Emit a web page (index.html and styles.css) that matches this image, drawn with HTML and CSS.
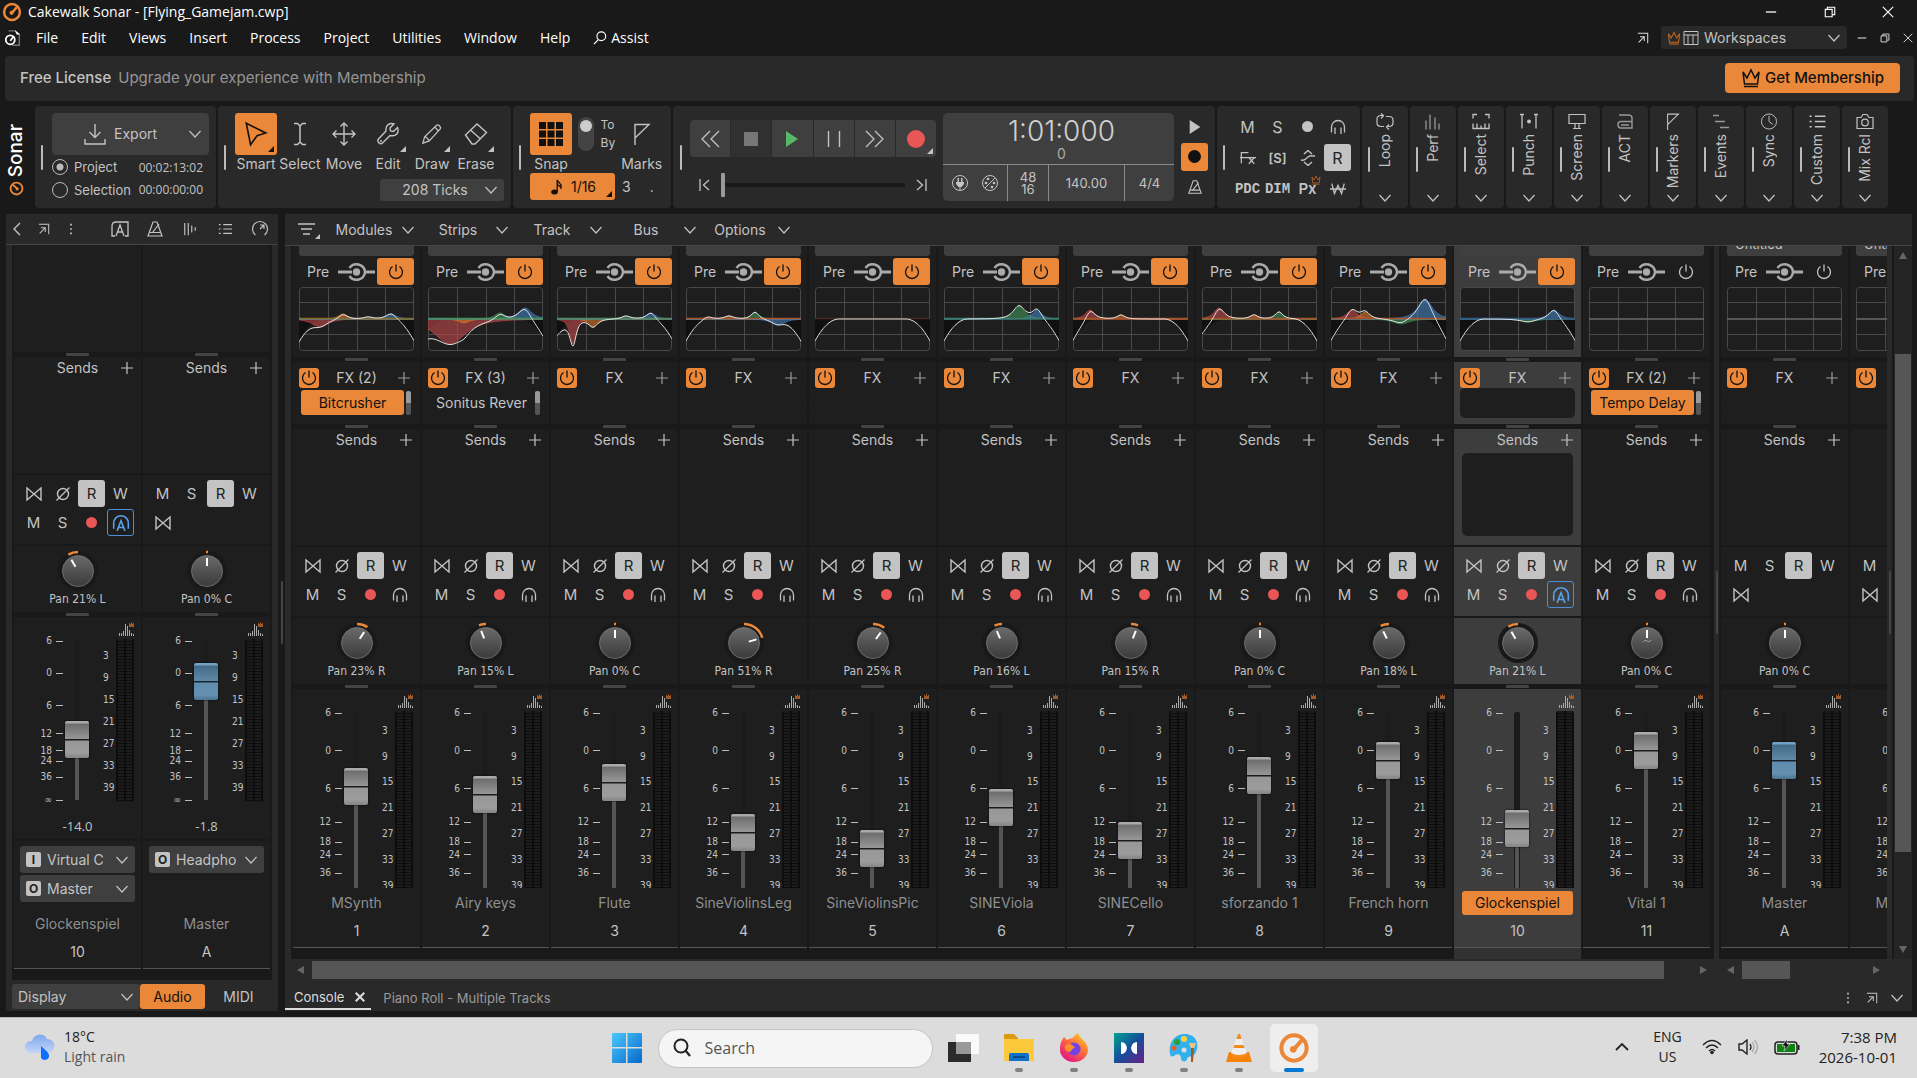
FILE: index.html
```html
<!DOCTYPE html>
<html lang="en">
<head>
<meta charset="utf-8">
<title>Cakewalk Sonar - [Flying_Gamejam.cwp]</title>
<link rel="stylesheet" href="styles.css">
</head>
<body>
<svg class="defs" aria-hidden="true">
  <symbol id="logo" viewBox="0 0 24 24"><circle cx="12" cy="12" r="9.5" fill="none" stroke="currentColor" stroke-width="3"/><path d="M11 14 18 6" stroke="currentColor" stroke-width="3"/><circle cx="11.500" cy="13" r="2.500" fill="currentColor"/></symbol>
  <symbol id="doc" viewBox="0 0 20 20"><path d="M5 2h7l5 4v12H9" fill="none" stroke="#777" stroke-width="1.500"/><path d="M12 1l6 5h-4z" fill="#fff"/><circle cx="7" cy="12" r="5" fill="#191919" stroke="#fff" stroke-width="2"/><path d="M7 13l4-5" stroke="#fff" stroke-width="2"/></symbol>
  <symbol id="chev" viewBox="0 0 14 14"><path d="M1.500 4 7 10l5.500-6" fill="none" stroke="currentColor" stroke-width="1.200"/></symbol>
  <symbol id="back" viewBox="0 0 14 14"><path d="M10 1 4 7l6 6" fill="none" stroke="currentColor" stroke-width="1.400"/></symbol>
  <symbol id="popout" viewBox="0 0 14 14"><path d="M1 1.500h11.500V13M2 12l6-6M3.500 5.500h5v5" fill="none" stroke="currentColor" stroke-width="1.200"/></symbol>
  <symbol id="dots" viewBox="0 0 14 14"><path d="M6 1h2v2H6zM6 6h2v2H6zM6 11h2v2H6z" fill="currentColor"/></symbol>
  <symbol id="arch" viewBox="0 0 18 16"><path d="M4 15H1V5q0-4 4-4h12v14h-3M5 15 9 4l4 11M6.500 11h5" fill="none" stroke="currentColor" stroke-width="1.300"/></symbol>
  <symbol id="metro" viewBox="0 0 18 18"><path d="M7 2h4l5 14H2zM4 12.500h10M6.500 12.500 13 4" fill="none" stroke="currentColor" stroke-width="1.200"/></symbol>
  <symbol id="bars" viewBox="0 0 16 16"><path d="M2 1v14M6 1v14M10 4v8M14 6v4" stroke="currentColor" stroke-width="1.300"/></symbol>
  <symbol id="list" viewBox="0 0 16 16"><path d="M1 3h2M6 3h10M1 8h2M6 8h10M1 13h2M6 13h10" stroke="currentColor" stroke-width="1.300"/></symbol>
  <symbol id="gauge" viewBox="0 0 18 18"><path d="M4.500 15A7.500 7.500 0 1 1 13.500 15M9 9l4-4M9 5l4 0v4" fill="none" stroke="currentColor" stroke-width="1.200"/></symbol>
  <symbol id="filter" viewBox="0 0 22 18"><path d="M0 3h17M3 8h11M5 13h7" stroke="currentColor" stroke-width="1.300"/><path d="M22 13v5h-5z" fill="currentColor"/></symbol>
  <symbol id="power" viewBox="0 0 18 18"><path d="M5.500 3.500a6.500 6.500 0 1 0 7 0M9 1.500v7" fill="none" stroke="currentColor" stroke-width="1.300"/></symbol>
  <symbol id="prepost" viewBox="0 0 37 22"><path d="M0 11h14M27 11h10" stroke="#aaa" stroke-width="3"/><path d="M11.500 7A8.500 8.500 0 0 1 27 11 8.500 8.500 0 0 1 11.500 15" fill="none" stroke="#aaa" stroke-width="2.500"/><circle cx="18.500" cy="11" r="3.700" fill="#aaa"/></symbol>
  <symbol id="plus" viewBox="0 0 12 12"><path d="M6 0v12M0 6h12" stroke="currentColor" stroke-width="1.200"/></symbol>
  <symbol id="bow" viewBox="0 0 16 14"><path d="M1 1v12L15 1v12z" fill="none" stroke="currentColor" stroke-width="1.400"/></symbol>
  <symbol id="phase" viewBox="0 0 16 16"><circle cx="8" cy="8" r="5.500" fill="none" stroke="currentColor" stroke-width="1.400"/><path d="M1.500 14.500l13-13" stroke="currentColor" stroke-width="1.300"/></symbol>
  <symbol id="phones" viewBox="0 0 16 16"><path d="M1.500 13V8a6.500 6.500 0 0 1 13 0v5M5 8.500V15M11 8.500V15M1.500 13.500H2M14 13.500h.5" fill="none" stroke="currentColor" stroke-width="1.300"/></symbol>
  <symbol id="autoin" viewBox="0 0 16 16"><path d="M1.500 13V8a6.500 6.500 0 0 1 13 0v5M4.500 15 8 6l3.500 9M6 12h4" fill="none" stroke="currentColor" stroke-width="1.400"/></symbol>
  <symbol id="spectrum" viewBox="0 0 16 14"><path d="M1.500 14v-3M3.500 14v-3M5.500 14V9M7.500 14V2M9.500 14V4M11.500 14V8M13.500 14v-3M15.500 14v-2" stroke="#aaa"/><path d="M11 1h1v1h1V0h1v2h1V1h1v4h-5z" fill="#a05a26"/></symbol>
  <symbol id="crown" viewBox="0 0 20 20"><path d="M2 4l4 6 4-8 4 8 4-6-1.500 12h-13zM3 18.500h14" fill="none" stroke="currentColor" stroke-width="1.500"/></symbol>
  <symbol id="layout" viewBox="0 0 16 16"><path d="M1 1.500h14v13H1zM1 5h14M5 5v9M10 5v9" fill="none" stroke="currentColor"/></symbol>
  <symbol id="mini" viewBox="0 0 14 14"><path d="M1 7h12" stroke="currentColor" stroke-width="1.500"/></symbol>
  <symbol id="restore" viewBox="0 0 14 14"><path d="M1.500 4h8v8.500h-8zM4 4V1.500h8.500V10H10" fill="none" stroke="currentColor" stroke-width="1.300"/></symbol>
  <symbol id="close" viewBox="0 0 14 14"><path d="M1 1l12 12M13 1 1 13" stroke="currentColor" stroke-width="1.300"/></symbol>
  <symbol id="closeb" viewBox="0 0 14 14"><path d="M1 1l12 12M13 1 1 13" stroke="currentColor" stroke-width="2.800"/></symbol>
  <symbol id="mag" viewBox="0 0 16 16"><circle cx="9.500" cy="6" r="5" fill="none" stroke="currentColor" stroke-width="1.300"/><path d="M6 10l-5 5" stroke="currentColor" stroke-width="1.300"/></symbol>
  <symbol id="export" viewBox="0 0 22 22"><path d="M11 1v13M5.500 9l5.500 5.500L16.500 9M1 16v5h20v-5" fill="none" stroke="currentColor" stroke-width="1.400"/></symbol>
  <symbol id="smart" viewBox="0 0 24 24"><path d="M3 2l18 9-8 2.500L7 22z" fill="none" stroke="currentColor" stroke-width="1.500"/></symbol>
  <symbol id="ibeam" viewBox="0 0 24 24"><path d="M6 1.500h3.500L12 4l2.500-2.500H18M12 4v16M6 22.500h3.500L12 20l2.500 2.500H18" fill="none" stroke="currentColor" stroke-width="1.500"/></symbol>
  <symbol id="move" viewBox="0 0 24 24"><path d="M12 1v22M1 12h22M8.500 4.500 12 1l3.500 3.500M8.500 19.500 12 23l3.500-3.500M4.500 8.500 1 12l3.500 3.500M19.500 8.500 23 12l-3.500 3.500" fill="none" stroke="currentColor" stroke-width="1.400"/></symbol>
  <symbol id="wrench" viewBox="0 0 24 24"><path d="M21.500 5.500 17.500 9.500 14.500 9 14 6l4-4C14 .5 9 3 10 9L2.500 17c-2 2.500 1.500 6 4 4L14 13.500c6 1.500 9.500-3 7.500-8z" fill="none" stroke="currentColor" stroke-width="1.400"/><circle cx="5" cy="19" r="1" fill="currentColor"/></symbol>
  <symbol id="pencil" viewBox="0 0 24 24"><path d="M2 22l2-7L17 2.500c2-1.500 5.500 2 4 4L9 19.500zM4.500 14.500l5 5M15 4.500l4.500 4.500" fill="none" stroke="currentColor" stroke-width="1.400"/></symbol>
  <symbol id="eraser" viewBox="0 0 24 24"><path d="M1.500 13 13 2l9.500 8.500L11 22H8zM6.500 8l10 9" fill="none" stroke="currentColor" stroke-width="1.400"/></symbol>
  <symbol id="grid9" viewBox="0 0 24 24"><path d="M0 0h7v7H0zM8.500 0h7v7h-7zM17 0h7v7h-7zM0 8.500h7v7H0zM8.500 8.500h7v7h-7zM17 8.500h7v7h-7zM0 17h7v7H0zM8.500 17h7v7h-7zM17 17h7v7h-7z" fill="#111"/></symbol>
  <symbol id="flag" viewBox="0 0 18 22"><path d="M2 22V1.500h14L2 15" fill="none" stroke="currentColor" stroke-width="1.400"/></symbol>
  <symbol id="note" viewBox="0 0 12 16"><ellipse cx="3.500" cy="13" rx="3.300" ry="2.500" fill="#111"/><path d="M6.200 13V1c1 3 4.500 3 4 7M6.200 5c1 2 4 2 4 5" fill="none" stroke="#111" stroke-width="1.300"/></symbol>
  <symbol id="rew" viewBox="0 0 20 18"><path d="M10 1 2 9l8 8M19 1l-8 8 8 8" fill="none" stroke="currentColor" stroke-width="1.300"/></symbol>
  <symbol id="ff" viewBox="0 0 20 18"><path d="M1 1l8 8-8 8M10 1l8 8-8 8" fill="none" stroke="currentColor" stroke-width="1.300"/></symbol>
  <symbol id="stop" viewBox="0 0 14 14"><path d="M0 0h14v14H0z" fill="#777"/></symbol>
  <symbol id="play" viewBox="0 0 14 18"><path d="M1 1l12 8-12 8z" fill="currentColor"/></symbol>
  <symbol id="pause" viewBox="0 0 14 16"><path d="M1.500 0v16M12.500 0v16" stroke="currentColor" stroke-width="1.400"/></symbol>
  <symbol id="tostart" viewBox="0 0 12 12"><path d="M1 0v12M10 1 4.500 6l5.500 5" fill="none" stroke="currentColor" stroke-width="1.300"/></symbol>
  <symbol id="toend" viewBox="0 0 12 12"><path d="M11 0v12M2 1l5.500 5L2 11" fill="none" stroke="currentColor" stroke-width="1.300"/></symbol>
  <symbol id="plug" viewBox="0 0 18 18"><circle cx="9" cy="9" r="7.500" fill="none" stroke="currentColor"/><path d="M5 8h8v2l-2.500 3h-3L5 10zM6.500 4h1.500v4H6.500zM10 4h1.500v4H10zM8.500 12h1v4h-1z" fill="currentColor"/></symbol>
  <symbol id="midi" viewBox="0 0 18 18"><circle cx="9" cy="9" r="7.500" fill="none" stroke="currentColor"/><path d="M4 14 14 4" stroke="currentColor"/><circle cx="5" cy="9" r="1.300" fill="currentColor"/><circle cx="7" cy="5" r="1.300" fill="currentColor"/><circle cx="11" cy="13" r="1.300" fill="currentColor"/><circle cx="13" cy="9" r="1.300" fill="currentColor"/></symbol>
  <symbol id="fxx" viewBox="0 0 18 16"><path d="M1.500 14V2h8M0 7.500h18M10 7.500l6 7M16 7.500l-6 7" fill="none" stroke="currentColor" stroke-width="1.400"/></symbol>
  <symbol id="flip" viewBox="0 0 16 16"><path d="M4 4l4-3.500L12 4M4 12l4 3.500L12 12M1 10c4 1 4-1 7-3 3-2 3-1 7-1" fill="none" stroke="currentColor" stroke-width="1.400"/></symbol>
  <symbol id="wbar" viewBox="0 0 18 14"><path d="M2 1l3 11 4-9 4 9 3-11M0 7h18" fill="none" stroke="currentColor" stroke-width="1.500"/></symbol>
  <symbol id="loop" viewBox="0 0 18 16"><path d="M8 13H5q-4 0-4-4V6q0-4 4-4h2M10 3h3q4 0 4 4v2q0 4-4 4h-2M5 0l2.500 2L5 5M13 11l-2.500 2.500L13 16" fill="none" stroke="currentColor" stroke-width="1.200"/></symbol>
  <symbol id="perf" viewBox="0 0 18 16"><path d="M2 7v9M6 1v15M11 4v12M15 10v6" stroke="#888" stroke-width="1.500"/></symbol>
  <symbol id="selr" viewBox="0 0 18 16"><path d="M1 5V1h4M13 1h4v4M1 10v5h16v-5M5 15v-5M9 15v-3M13 15v-5" fill="none" stroke="currentColor" stroke-width="1.300"/></symbol>
  <symbol id="punch" viewBox="0 0 18 16"><path d="M2 1v14M16 1v14M0 1h4M14 1h4" stroke="currentColor" stroke-width="1.300"/><circle cx="9" cy="8" r="2" fill="currentColor"/></symbol>
  <symbol id="screen" viewBox="0 0 18 16"><path d="M1 1h16v9H1zM7 10v5M11 10v5M5 15h8" fill="none" stroke="currentColor" stroke-width="1.200"/></symbol>
  <symbol id="act" viewBox="0 0 18 16"><path d="M3 1.500h9q4 0 4 3v10H5q-3 0-3-3.500 0-3 3-3h11M5 11.500h8" fill="none" stroke="#999" stroke-width="1.400"/></symbol>
  <symbol id="events" viewBox="0 0 18 16"><path d="M1 2h6M3 8h10M8 14h9" stroke="#999" stroke-width="1.600"/></symbol>
  <symbol id="clock" viewBox="0 0 18 18"><circle cx="9" cy="9" r="8" fill="none" stroke="currentColor"/><path d="M9 3v6l4 3" fill="none" stroke="currentColor"/></symbol>
  <symbol id="cam" viewBox="0 0 18 16"><path d="M1 4h4l2-3h4l2 3h4v11H1z" fill="none" stroke="currentColor" stroke-width="1.200"/><circle cx="9" cy="9" r="3.300" fill="none" stroke="currentColor" stroke-width="1.200"/></symbol>
</svg>

<div class="app">
  <header class="titlebar">
    <svg class="s20 orange"><use href="#logo"/></svg>
    <span class="wintitle">Cakewalk Sonar - [Flying_Gamejam.cwp]</span>
    <div class="winbtns">
      <button aria-label="Minimize"><svg class="s12"><use href="#mini"/></svg></button>
      <button aria-label="Restore"><svg class="s12"><use href="#restore"/></svg></button>
      <button aria-label="Close"><svg class="s12"><use href="#close"/></svg></button>
    </div>
  </header>
  <nav class="menubar">
    <svg class="s18"><use href="#doc"/></svg>
    <div class="menus">
      <button>File</button><button>Edit</button><button>Views</button><button>Insert</button><button>Process</button><button>Project</button><button>Utilities</button><button>Window</button><button>Help</button>
      <button class="assist"><svg class="s14"><use href="#mag"/></svg>Assist</button>
    </div>
    <div class="menuright">
      <button aria-label="Pop out"><svg class="s12"><use href="#popout"/></svg></button>
      <button class="workspaces"><svg class="s14 crownc"><use href="#crown"/></svg><svg class="s16"><use href="#layout"/></svg><span>Workspaces</span><svg class="s14"><use href="#chev"/></svg></button>
      <button aria-label="Minimize document"><svg class="s10"><use href="#mini"/></svg></button>
      <button aria-label="Restore document"><svg class="s10"><use href="#restore"/></svg></button>
      <button aria-label="Close document"><svg class="s10"><use href="#close"/></svg></button>
    </div>
  </nav>
  <section class="banner">
    <strong>Free License</strong><span>Upgrade your experience with Membership</span>
    <button class="getm"><svg class="s20"><use href="#crown"/></svg>Get Membership</button>
  </section>

  <section class="toolbar">
    <div class="brand"><span>Sonar</span><svg class="s18 orange"><use href="#logo"/></svg></div>
    <div class="mod m-export">
      <i class="grip"></i>
      <div class="exportbox">
        <button class="exportbtn"><svg class="s22"><use href="#export"/></svg><span>Export</span><svg class="s14"><use href="#chev"/></svg></button>
        <label><input type="radio" name="len" checked><span>Project</span><em>00:02:13:02</em></label>
        <label><input type="radio" name="len"><span>Selection</span><em>00:00:00:00</em></label>
      </div>
    </div>
    <div class="mod m-tools">
      <i class="grip"></i>
      <div class="toolsbox">
        <div class="tools">
          <button class="tool on"><b class="more"><svg class="s26"><use href="#smart"/></svg></b>Smart</button>
          <button class="tool"><b><svg class="s24"><use href="#ibeam"/></svg></b>Select</button>
          <button class="tool"><b><svg class="s24"><use href="#move"/></svg></b>Move</button>
          <button class="tool"><b class="more"><svg class="s24"><use href="#wrench"/></svg></b>Edit</button>
          <button class="tool"><b class="more"><svg class="s22"><use href="#pencil"/></svg></b>Draw</button>
          <button class="tool"><b class="more"><svg class="s24"><use href="#eraser"/></svg></b>Erase</button>
        </div>
        <button class="ticks"><span>208 Ticks</span><svg class="s14"><use href="#chev"/></svg></button>
      </div>
    </div>
    <div class="mod m-snap">
      <i class="grip"></i>
      <div class="snapbox">
        <div class="snaptop">
          <button class="tool on"><b><svg class="s24"><use href="#grid9"/></svg></b>Snap</button>
          <div class="toby"><button class="toggle" role="switch" aria-checked="true" aria-label="Snap to"></button><div><span>To</span><span>By</span></div></div>
          <button class="tool"><b><svg class="s22"><use href="#flag"/></svg></b>Marks</button>
        </div>
        <div class="snapbot"><button class="res more"><svg class="s16"><use href="#note"/></svg>1/16</button><button>3</button><button>.</button></div>
      </div>
    </div>
    <div class="mod m-trans">
      <i class="grip"></i>
      <div class="transbox">
        <div class="tbtns">
          <button aria-label="Rewind"><svg class="s20"><use href="#rew"/></svg></button>
          <button class="dim" aria-label="Stop"><svg class="s14"><use href="#stop"/></svg></button>
          <button class="green" aria-label="Play"><svg class="s18"><use href="#play"/></svg></button>
          <button aria-label="Pause"><svg class="s16"><use href="#pause"/></svg></button>
          <button aria-label="Fast forward"><svg class="s20"><use href="#ff"/></svg></button>
          <button class="more" aria-label="Record"><i class="rec"></i></button>
        </div>
        <div class="seek"><button aria-label="Go to start"><svg class="s12"><use href="#tostart"/></svg></button><input type="range" value="0" aria-label="Position"><button aria-label="Go to end"><svg class="s12"><use href="#toend"/></svg></button></div>
      </div>
      <div class="lcd">
        <div class="lcdtop"><strong>1:01:000</strong><span>0</span></div>
        <div class="lcdbot"><div><svg class="s18"><use href="#plug"/></svg><svg class="s18"><use href="#midi"/></svg></div><div class="rate"><span>48</span><span>16</span></div><div>140.00</div><div>4/4</div></div>
      </div>
      <div class="side3">
        <button aria-label="Audition"><svg class="s16"><use href="#play"/></svg></button>
        <button class="orangebtn" aria-label="Auto punch"><i class="blackdot"></i></button>
        <button aria-label="Metronome"><svg class="s16"><use href="#metro"/></svg></button>
      </div>
    </div>
    <div class="mod m-mix">
      <i class="grip"></i>
      <div class="mixgrid">
        <button>M</button><button>S</button><button aria-label="Arm"><i class="graydot"></i></button><button aria-label="Input echo"><svg class="s16"><use href="#phones"/></svg></button>
        <button aria-label="Bypass effects"><svg class="s16"><use href="#fxx"/></svg></button><button class="sm">[S]</button><button aria-label="Exclusive"><svg class="s16"><use href="#flip"/></svg></button><button class="lit">R</button>
        <button class="mono">PDC</button><button class="mono">DIM</button><button class="px">Px<svg class="s10 crownc"><use href="#crown"/></svg></button><button aria-label="Write"><svg class="s16"><use href="#wbar"/></svg></button>
      </div>
    </div>
    <div class="vmods" id="vmods"></div>
  </section>

  <main class="work">
    <aside class="inspector">
      <div class="ihead">
        <button aria-label="Collapse"><svg class="s14"><use href="#back"/></svg></button><button aria-label="Pop out"><svg class="s12"><use href="#popout"/></svg></button><button aria-label="Options"><svg class="s12"><use href="#dots"/></svg></button><i></i>
        <button aria-label="Arranger"><svg class="s18"><use href="#arch"/></svg></button><button aria-label="Metronome"><svg class="s18"><use href="#metro"/></svg></button><button aria-label="Bars"><svg class="s14"><use href="#bars"/></svg></button><button aria-label="List"><svg class="s14"><use href="#list"/></svg></button><button aria-label="Meter"><svg class="s18"><use href="#gauge"/></svg></button>
      </div>
      <div class="ibody" id="ibody"></div>
      <div class="ifoot"><button class="display"><span>Display</span><svg class="s14"><use href="#chev"/></svg></button><button class="audio">Audio</button><button class="midi">MIDI</button></div>
    </aside>
    <div class="vsplit"><i></i></div>
    <section class="console">
      <div class="chead">
        <button class="filt" aria-label="Filter"><svg><use href="#filter"/></svg></button>
        <button class="cm"><span>Modules</span><svg class="s14"><use href="#chev"/></svg></button><button class="cm"><span>Strips</span><svg class="s14"><use href="#chev"/></svg></button><button class="cm"><span>Track</span><svg class="s14"><use href="#chev"/></svg></button><button class="cm"><span>Bus</span><svg class="s14"><use href="#chev"/></svg></button><button class="cm"><span>Options</span><svg class="s14"><use href="#chev"/></svg></button>
      </div>
      <div class="cbody">
        <div class="tracks" id="tracks"></div>
        <div class="csplit"><i></i></div>
        <div class="buses" id="buses"></div>
        <div class="csplit"><i></i></div>
        <div class="vscroll"><i class="up"></i><i class="vthumb"></i><i class="down"></i></div>
      </div>
      <div class="hscrolls">
        <div class="hs hs1"><i class="left"></i><div><i class="hthumb"></i></div><i class="right"></i></div>
        <div class="hs hs2"><i class="left"></i><div><i class="hthumb"></i></div><i class="right"></i></div>
      </div>
      <div class="tabs">
        <button class="tab active">Console<svg class="s10"><use href="#closeb"/></svg></button>
        <button class="tab">Piano Roll - Multiple Tracks</button>
        <div class="tabright"><button aria-label="More"><svg class="s12"><use href="#dots"/></svg></button><button aria-label="Pop out"><svg class="s12"><use href="#popout"/></svg></button><button aria-label="Collapse"><svg class="s14"><use href="#chev"/></svg></button></div>
      </div>
    </section>
  </main>
</div>

<footer class="taskbar">
  <button class="weather">
    <svg width="32" height="30" viewBox="0 0 32 30"><defs><linearGradient id="cl" x1="0" y1="0" x2="0" y2="1"><stop offset="0" stop-color="#7fa8ee"/><stop offset="1" stop-color="#c3d6f8"/></linearGradient></defs><path d="M7 21a6 6 0 0 1 0-12h1a8 8 0 0 1 15-2 7 7 0 0 1 1 14z" fill="url(#cl)"/><path d="M17 14c4 4 9 7 8 11a4.500 4.500 0 0 1-8 1z" fill="#0f6fff"/></svg>
    <span><b>18°C</b><em>Light rain</em></span>
  </button>
  <div class="taskmid">
    <button aria-label="Start"><svg width="30" height="30" viewBox="0 0 30 30"><defs><linearGradient id="wn" x1="0" y1="0" x2="1" y2="1"><stop offset="0" stop-color="#4cc8fb"/><stop offset="1" stop-color="#0669cb"/></linearGradient></defs><path d="M0 1q0-1 1-1h13v14H0zM15.500 0H29q1 0 1 1v13H15.500zM0 15.500h14V30H1q-1 0-1-1zM15.500 15.500H30V29q0 1-1 1H15.500z" fill="url(#wn)"/></svg></button>
    <label class="search"><svg width="20" height="20" viewBox="0 0 20 20"><circle cx="9" cy="8" r="6.500" fill="none" stroke="#222" stroke-width="2"/><path d="M13.500 12.500 18 18" stroke="#222" stroke-width="2.200"/></svg><input type="text" placeholder="Search" aria-label="Search"></label>
    <button aria-label="Task view"><svg width="32" height="30" viewBox="0 0 32 30"><path d="M0 9h23v20H0z" fill="#2b2b2b"/><path d="M8 1h23v20H8z" fill="#fff" opacity=".85"/><path d="M8 9h15v12H8z" fill="#999"/></svg></button>
    <button class="run" aria-label="File Explorer"><svg width="32" height="30" viewBox="0 0 32 30"><path d="M1 2q0-1 1-1h9l4 4v5H1z" fill="#dc9a10"/><path d="M1 6h30v21q0 1-1 1H2q-1 0-1-1z" fill="#fdc93c"/><path d="M6 28v-6q0-2 2-2h16q2 0 2 2v6z" fill="#1071c9"/><path d="M10 24h12" stroke="#053f78" stroke-width="1.500"/></svg></button>
    <button class="run" aria-label="Firefox"><svg width="32" height="30" viewBox="0 0 32 30"><defs><linearGradient id="ff1" x1="1" y1="0" x2=".3" y2="1"><stop offset="0" stop-color="#ffe226"/><stop offset=".5" stop-color="#ff7139"/><stop offset="1" stop-color="#e31587"/></linearGradient></defs><path d="M2 16C2 10 4 7 6 4l3 3c2-1 4-2 6-2 1-2 3-4 5-5 1 3 3 5 6 8s4 6 4 9a14 12.500 0 0 1-28-1z" fill="url(#ff1)"/><circle cx="16" cy="16" r="6.500" fill="#7542e5"/><path d="M7 13c4-4 8-1 10 2-4 0-3 4-6 4-3-1-5-3-4-6z" fill="#ff8f2e"/></svg></button>
    <button class="run" aria-label="Editor"><svg width="32" height="30" viewBox="0 0 32 30"><defs><linearGradient id="ed" x1="0" y1="0" x2="1" y2="1"><stop offset="0" stop-color="#00a58e"/><stop offset=".5" stop-color="#154f9c"/><stop offset="1" stop-color="#6b1e86"/></linearGradient></defs><path d="M1 0h30v30H1z" fill="url(#ed)"/><path d="M8 9q5 0 6 6-1 6-6 6zM24 9q-5 0-6 6 1 6 6 6z" fill="#fff"/></svg></button>
    <button class="run" aria-label="Paint"><svg width="32" height="30" viewBox="0 0 32 30"><path d="M2 21C0 8 8 1 17 1c10 0 15 9 11 18-2 6-8 3-9 7 0 3-6 4-6-1 0-4-4-5-7-2-2 1-4 0-4-2z" fill="#31b0ee"/><circle cx="9" cy="9" r="3" fill="#2f9e38"/><circle cx="16" cy="6" r="3" fill="#ffd43a"/><circle cx="6" cy="15" r="2.500" fill="#ef5a28"/><circle cx="16" cy="17" r="2.500" fill="#ddd"/><path d="M21 10h7l-2 6h-3z" fill="#e6c48b"/><path d="M23 15h3l-1 14h-2z" fill="#a15a20"/></svg></button>
    <button class="run" aria-label="VLC"><svg width="32" height="30" viewBox="0 0 32 30"><path d="M6 19h20l3 10H3z" fill="#f5820a"/><path d="M15 1h2l7 22q-8 4-16 0z" fill="#f58a1d"/><path d="M13 6h6l2 6H11zM10 15h12l2 5q-8 4-16 0z" fill="#eee"/></svg></button>
    <button class="run cur" aria-label="Cakewalk Sonar"><svg width="32" height="32" class="orange"><use href="#logo"/></svg></button>
  </div>
  <div class="tray">
    <button aria-label="Hidden icons"><svg width="14" height="14" viewBox="0 0 14 14"><path d="M1 10l6-6 6 6" fill="none" stroke="#222" stroke-width="1.800"/></svg></button>
    <button class="lang"><span>ENG</span><span>US</span></button>
    <button class="quick" aria-label="Quick settings">
      <svg width="20" height="16" viewBox="0 0 20 16"><path d="M1 6q9-9 18 0M4 9q6-6 12 0M7 12q3-3 6 0" fill="none" stroke="#222" stroke-width="1.500"/><circle cx="10" cy="13.500" r="1.800" fill="#222"/></svg>
      <svg width="20" height="16" viewBox="0 0 20 16"><path d="M1 5h3l5-4v14l-5-4H1z" fill="none" stroke="#222" stroke-width="1.400"/><path d="M12 5q2 3 0 6" fill="none" stroke="#222" stroke-width="1.300"/><path d="M14 3q4 5 0 10M16.500 1q6 7 0 14" fill="none" stroke="#aaa" stroke-width="1.300"/></svg>
      <svg width="26" height="16" viewBox="0 0 26 16"><rect x="1" y="3" width="22" height="12" rx="3" fill="#dcdcdc" stroke="#222" stroke-width="1.500"/><path d="M3 5h18v8H3z" fill="#0f830f"/><path d="M24.500 6v5" stroke="#222" stroke-width="2"/><path d="M13 0 8 7h3l-1 5 6-7h-3z" fill="#111" stroke="#ddd" stroke-width=".7"/></svg>
    </button>
    <button class="clock"><span>7:38 PM</span><span>2026-10-01</span></button>
  </div>
</footer>
<script src="app.js"></script>
</body>
</html>
```
FILE: styles.css
```css
* { box-sizing: border-box; }
:root {
  --orange: #ea8738;
  --panel: #292929;
  --dark: #191919;
  --strip: #1e1e1e;
  --text: #c3c3c3;
}
body {
  margin: 0;
  min-height: 100vh;
  display: flex;
  flex-direction: column;
  background: var(--dark);
  color: var(--text);
  font: 14px/18px Inter, "Liberation Sans", sans-serif;
  overflow: hidden;
}
button {
  font: inherit;
  color: inherit;
  background: none;
  border: 0;
  padding: 0;
  margin: 0;
  display: flex;
  align-items: center;
  justify-content: center;
}
input { margin: 0; }
svg { display: block; flex: none; }
em, i, b { font-style: normal; font-weight: 400; }
.defs { position: absolute; width: 0; height: 0; }
.s10 { width: 10px; height: 10px; }
.s12 { width: 12px; height: 12px; }
.s14 { width: 14px; height: 14px; }
.s16 { width: 16px; height: 16px; }
.s18 { width: 18px; height: 18px; }
.s20 { width: 20px; height: 20px; }
.s22 { width: 22px; height: 22px; }
.s24 { width: 24px; height: 24px; }
.s26 { width: 26px; height: 26px; }
.orange { color: var(--orange); }
.crownc { color: #c06a25; }
.more { position: relative; }
.more::after {
  content: "";
  position: absolute;
  right: 3px;
  bottom: 3px;
  border: 3px solid transparent;
  border-right-color: currentColor;
  border-bottom-color: currentColor;
}

.app { flex: 1; display: flex; flex-direction: column; min-height: 0; }

/* title and menu rows */
.titlebar, .menubar { display: flex; align-items: center; color: #fff; font-family: "Open Sans", "Noto Sans", sans-serif; font-size: 14px; }
.titlebar { height: 24px; padding: 0 6px 0 2px; gap: 6px; }
.winbtns { margin-left: auto; display: flex; }
.winbtns button { width: 59px; }
.winbtns button:last-child { width: 46px; margin-left: 6px; }
.menubar { height: 27px; padding: 0 4px; gap: 10px; }
.menus { display: flex; gap: 23px; padding-left: 4px; }
.assist { gap: 4px; }
.menuright { margin-left: auto; display: flex; align-items: center; gap: 13px; color: #ddd; font-family: Inter, sans-serif; font-size: 14px; }
.workspaces { width: 186px; height: 23px; margin: 0 -3px 0 -1px; background: var(--panel); border-radius: 3px; padding: 0 6px; gap: 2px; color: var(--text); }
.workspaces span { flex: 1; text-align: left; padding-left: 3px; }

.banner { margin: 5px 3px 5px 5px; height: 45px; background: var(--panel); border-radius: 4px; display: flex; align-items: center; gap: 7px; padding: 0 14px 1px 15px; font-size: 15px; }
.banner strong { font-weight: 500; }
.banner span { color: #969696; }
.getm { margin-left: auto; width: 175px; height: 30px; background: var(--orange); color: #111; border-radius: 4px; gap: 4px; font-weight: 500; }

/* control bar */
.toolbar { display: flex; gap: 2px; height: 102px; }
.brand { width: 33px; display: flex; flex-direction: column; align-items: center; justify-content: flex-end; gap: 4px; padding: 0 1px 12px 0; }
.brand span { writing-mode: vertical-rl; transform: rotate(180deg); font-size: 19px; font-weight: 500; color: #fff; line-height: 20px; }
.brand svg { transform: rotate(-90deg); width: 15px; height: 15px; }
.mod { background: var(--panel); border-radius: 4px; display: flex; padding: 7px 7px 7px 6px; }
.mod .grip { width: 2px; height: 25px; background: #bbb; border-radius: 1px; align-self: center; margin-top: 1px; margin-right: 9px; flex: none; }
.m-export { width: 181px; }
.exportbox { flex: 1; display: flex; flex-direction: column; }
.exportbtn { height: 43px; background: #3f3f3f; border-radius: 4px; gap: 8px; padding: 0 7px; margin-bottom: 1px; }
.exportbtn span { flex: 1; text-align: left; }
.exportbtn svg:first-child { margin-left: 25px; }
.exportbox label { display: flex; align-items: center; height: 23px; font-size: 13px; gap: 6px; }
.exportbox em { margin-left: auto; font: 12px "Open Sans", sans-serif; padding-right: 6px; }
.exportbox input { appearance: none; width: 16px; height: 16px; border: 1px solid #bbb; border-radius: 50%; }
.exportbox input:checked { background: radial-gradient(#bbb 3px, transparent 4px); }
.m-tools { width: 293px; }
.toolsbox { flex: 1; display: flex; flex-direction: column; justify-content: space-between; }
.tools { display: flex; gap: 2px; }
.tool { flex-direction: column; width: 42px; font-size: 14px; }
.tool b { width: 42px; height: 42px; border-radius: 3px; display: flex; align-items: center; justify-content: center; }
.tool.on b { background: var(--orange); color: #111; }
.ticks { align-self: flex-end; width: 124px; height: 22px; background: #3f3f3f; border-radius: 3px; padding: 0 6px; }
.ticks span { flex: 1; text-align: center; }
.m-snap { width: 158px; }
.snapbox { flex: 1; }
.snaptop { display: flex; justify-content: space-between; padding-right: 3px; }
.toby { display: flex; gap: 7px; margin-top: 4px; height: 34px; }
.toggle { width: 16px; background: #444; border-radius: 8px; align-items: flex-start; padding-top: 3px; }
.toggle::before { content: ""; width: 12px; height: 12px; border-radius: 50%; background: #ccc; }
.toby div { display: flex; flex-direction: column; font-size: 12px; justify-content: space-between; line-height: 16px; }
.snapbot { display: flex; gap: 7px; }
.res { width: 85px; height: 27px; background: var(--orange); color: #111; border-radius: 3px; gap: 6px; }
.snapbot button + button { margin-right: 12px; }
.m-trans { width: 542px; gap: 7px; padding-left: 7px; }
.m-trans .grip { margin-right: 1px; }
.transbox { width: 246px; padding-top: 7px; }
.tbtns { display: grid; grid-template-columns: repeat(6, 1fr); gap: 1px; height: 37px; border-radius: 4px; overflow: hidden; }
.tbtns button { background: #3f3f3f; }
.tbtns .dim { background: #303030; }
.tbtns .green { color: #56b968; }
.rec { width: 18px; height: 18px; border-radius: 50%; background: #ea5555; }
.seek { display: flex; align-items: center; margin-top: 16px; padding: 0 9px; gap: 10px; }
.seek input { flex: 1; min-width: 0; appearance: none; background: linear-gradient(#191919, #191919) center / 100% 4px no-repeat; height: 24px; }
.seek input::-webkit-slider-thumb { appearance: none; width: 4px; height: 24px; background: #999; border-radius: 1px; }
.lcd { width: 231px; background: #3f3f3f; border-radius: 5px; display: flex; flex-direction: column; }
.lcdtop { height: 52px; display: flex; flex-direction: column; align-items: center; border-bottom: 1px solid #888; padding: 4px 0 0 6px; }
.lcdtop strong { font: 300 28px/28px Inter, sans-serif; color: #d0d0d0; }
.lcdtop span { line-height: 18px; color: #aaa; }
.lcdbot { flex: 1; display: grid; grid-template-columns: 64px 41px 76px 1fr; font-size: 13px; }
.lcdbot > div { display: flex; align-items: center; justify-content: center; gap: 12px; border-left: 1px solid #888; }
.lcdbot > div:first-child { border-left: 0; }
.lcdbot .rate { flex-direction: column; gap: 0; line-height: 12px; }
.side3 { width: 27px; display: flex; flex-direction: column; gap: 3px; }
.side3 button { height: 28px; border-radius: 3px; }
.orangebtn { background: var(--orange); }
.blackdot, .graydot { width: 13px; height: 13px; border-radius: 50%; background: #111; }
.graydot { width: 11px; height: 11px; background: var(--text); }
.m-mix { width: 143px; }
.mixgrid { flex: 1; display: grid; grid-template-columns: repeat(4, 27px); grid-auto-rows: 27px; gap: 4px 3px; font-size: 16px; }
.mixgrid .lit { background: #c3c3c3; color: #222; border-radius: 3px; }
.mixgrid .sm { font-size: 13px; font-weight: 600; }
.mixgrid .mono { font: 700 14px "Liberation Mono", monospace; }
.mixgrid .px { font-weight: 600; font-size: 15px; position: relative; }
.mixgrid .px svg { position: absolute; right: 0; top: 0; }
.vmods { display: flex; gap: 2px; }
.vmods .mod { width: 46px; padding-bottom: 3px; }
.vmods .grip { margin-right: 7px; }
.vmods button { flex-direction: column; justify-content: flex-start; width: 18px; height: 100%; margin-left: -1px; }
.vmods svg:first-child { width: 18px; height: 17px; }
.vmods span { writing-mode: vertical-rl; transform: rotate(180deg); line-height: 18px; margin: 4px 0 auto; }

/* work area */
.work { flex: 1; display: flex; padding: 6px 5px 6px 6px; min-height: 0; }
.inspector { width: 272px; background: var(--panel); display: flex; flex-direction: column; }
.ihead { height: 31px; display: grid; grid-template-columns: 22px 32px 22px 20px repeat(5, 35px); align-items: center; border-bottom: 1px solid #444; }
.ibody { flex: 1; min-height: 0; margin: 0 6px; padding: 0 2px; background: var(--dark); display: flex; gap: 2px; }
.ifoot { height: 31px; padding: 4px 6px 2px; display: flex; }
.display { width: 128px; background: #3f3f3f; border-radius: 3px; padding: 0 6px; }
.display span { flex: 1; text-align: left; }
.audio { width: 65px; background: var(--orange); color: #111; border-radius: 3px; }
.midi { flex: 1; }
.vsplit { width: 7px; display: flex; justify-content: center; padding-top: 367px; }
.vsplit i, .csplit i { width: 2px; height: 63px; background: #444; border-radius: 1px; }
.console { flex: 1; min-width: 0; background: var(--panel); display: flex; flex-direction: column; }
.chead { height: 32px; display: flex; align-items: center; border-bottom: 1px solid #444; padding-left: 12px; }
.filt { width: 30px; justify-content: flex-start; }
.filt svg { width: 24px; height: 18px; }
.cm { width: 94px; justify-content: flex-start; }
.cm span { width: 74px; text-align: center; }
.cbody { flex: 1; min-height: 0; display: flex; padding-left: 6px; }
.tracks { flex: 1; min-width: 0; overflow: hidden; }
.tracks, .buses { background: var(--dark); display: flex; gap: 2px; padding: 0 2px; }
.buses { width: 168px; overflow: hidden; }
.csplit { width: 5px; display: flex; justify-content: center; padding-top: 325px; }
.vscroll { width: 20px; background: #242424; border-left: 2px solid var(--dark); display: flex; flex-direction: column; align-items: center; padding: 6px 0; }
.vthumb { width: 16px; height: 498px; background: #565656; margin-top: 95px; }
.up, .down, .left, .right { border: 4px solid transparent; width: 0; height: 0; }
.up { border-bottom: 7px solid #666; border-top: 0; }
.down { border-top: 7px solid #666; border-bottom: 0; margin-top: auto; }
.left { border-right: 7px solid #666; border-left: 0; }
.right { border-left: 7px solid #666; border-right: 0; }
.hscrolls { display: flex; height: 22px; padding: 2px 32px 0 12px; gap: 20px; }
.hs { display: flex; align-items: center; gap: 8px; height: 18px; }
.hs div { flex: 1; height: 18px; display: flex; }
.hs1 { flex: 1; }
.hs2 { width: 153px; }
.hthumb { background: #565656; }
.hs1 .hthumb { width: 98%; }
.hs2 .hthumb { width: 48px; }
.tabs { display: flex; height: 30px; align-items: stretch; font-size: 13px; color: #999; padding-top: 3px; }
.tab { padding: 0 8px; }
.tab.active { color: #ddd; border-bottom: 2px solid #ddd; gap: 11px; padding: 2px 6px 0 9px; margin: 0 4px 1px 0; }
.tabright { margin-left: auto; display: flex; gap: 12px; padding-right: 8px; color: var(--text); }

/* channel strip */
.strip { width: 127px; flex: none; display: flex; flex-direction: column; gap: 2px; }
.sec { background: var(--strip); flex: none; }
.sgrip { height: 5px; margin: -2px 0; flex: none; display: flex; justify-content: center; align-items: center; }
.sgrip::before { content: ""; width: 23px; height: 3px; background: #444; border-radius: 1px; }
.sel .sec { background: #3d3d3d; }
.sec-eq { height: 111px; padding: 0 6px; }
.preset { height: 10px; background: #3f3f3f; border-radius: 0 0 3px 3px; overflow: hidden; font-size: 13px; padding-left: 8px; }
.preset span { display: block; margin-top: -11px; }
.prerow { height: 27px; margin: 2px 0; display: flex; align-items: center; }
.prerow > span { width: 39px; padding-left: 8px; }
.prerow > svg { width: 37px; height: 22px; }
.pw { width: 37px; height: 27px; border-radius: 3px; margin-left: auto; }
.pw.on, .fxpw { background: var(--orange); color: #111; }
.eq { width: 115px; height: 64px; display: block; }
.sec-fx { height: 62px; padding: 6px 6px 0; }
.fxhead { display: flex; align-items: center; height: 20px; }
.fxpw { width: 20px; height: 20px; border-radius: 3px; }
.fxhead span { flex: 1; text-align: center; }
.fxhead > button:last-child { width: 20px; height: 20px; color: #999; }
.fxlist { height: 30px; display: flex; padding: 2px; gap: 2px; border-radius: 5px; background: var(--strip); }
.fxlist button { width: 103px; height: 25px; border-radius: 3px; }
.fxlist button.on { background: var(--orange); color: #111; }
.fxlist i { width: 5px; height: 24px; margin-top: 1px; border-radius: 2px; background: linear-gradient(#999 50%, #555 50%); }
.sec-sends { height: 116px; padding: 1px 6px 0; }
.sendhead { display: grid; grid-template-columns: 16px 1fr 16px; align-items: center; height: 20px; text-align: center; }
.sendhead span { grid-column: 2; }
.sendhead button { height: 20px; }
.sendbox { height: 83px; margin: 3px 2px 0; border-radius: 5px; background: var(--strip); }
.sec-btns { height: 69px; padding: 5px 6px 0; display: grid; grid-template-columns: repeat(4, 27px); grid-auto-rows: 27px; gap: 2px; font-size: 15px; }
.sec-btns .lit { background: #c3c3c3; color: #222; border-radius: 3px; }
.sec-btns .rd { width: 11px; height: 11px; border-radius: 50%; background: #ea5555; }
.sec-btns .echo { border: 1px solid #4c8fd6; border-radius: 3px; color: #58a0ea; }
.sec-pan { height: 66px; display: flex; flex-direction: column; align-items: center; font: 12px/16px "DejaVu Sans Condensed", "DejaVu Sans", sans-serif; padding-top: 3px; }
.knob { position: relative; width: 42px; height: 42px; }
.knob input { position: absolute; inset: 0; width: 100%; height: 100%; opacity: 0; }
.sec-fader { flex: 1 1 0; min-height: 0; overflow: hidden; position: relative; --len: 187px; font: 10px/12px "DejaVu Sans Condensed", "DejaVu Sans", sans-serif; }
.insp .sec-fader { --len: 159px; }
.fader { position: absolute; left: 51px; top: 5px; width: 24px; height: calc(var(--len) + 37px); writing-mode: vertical-lr; direction: rtl; appearance: none; background: linear-gradient(#555, #555) center bottom 18px / 4px calc(var(--v) * 1px) no-repeat; }
.fader::-webkit-slider-runnable-track { width: 24px; background: none; }
.fader::-webkit-slider-thumb { appearance: none; width: 24px; height: 37px; border-radius: 2px; box-shadow: 0 0 2px #000; background: linear-gradient(#aaa 0 2px, #6d6d6d 3px, #979797 18px, #1b1b1b 18px 19px, #989898 20px, #9c9c9c 32px, #888 36px); }
.fader.blue::-webkit-slider-thumb { background: linear-gradient(#73a2c4 0 2px, #446a86 3px, #6089a8 18px, #17242d 18px 19px, #5f8caf 20px, #6590b0 32px, #4f7897 36px); }
.slot { position: absolute; left: 61px; top: 23px; width: 4px; height: var(--len); background: #1b1b1b; border-radius: 2px; }
.sel .slot { left: 60px; width: 6px; }
.lab { position: absolute; right: 78px; transform: translateY(-50%); display: flex; align-items: center; gap: 4px; }
.lab::after { content: ""; width: 7px; height: 1px; background: #bbb; }
.rlab { position: absolute; left: 89px; transform: translateY(-50%); }
.meter { position: absolute; left: 102px; top: 22px; width: 18px; height: calc(var(--len) + 4px); background: repeating-linear-gradient(transparent 0 2px, #0d0d0d 2px 3px), linear-gradient(90deg, #0d0d0d 2px, #1c1c1c 2px 8px, #0d0d0d 8px 10px, #1c1c1c 10px 16px, #0d0d0d 16px); border-radius: 2px; }
.spec { position: absolute; left: 104px; top: 5px; width: 16px; height: 14px; }
.val { position: absolute; left: 0; right: 0; bottom: 4px; text-align: center; font: 13px/18px "Open Sans", sans-serif; }
.sec-name { margin-top: -2px; height: 60px; padding: 3px 8px 0; text-align: center; border-bottom: 1px solid #555; }
.nm { height: 24px; border: 0; width: 100%; border-radius: 3px; color: #8f8f8f; white-space: nowrap; }
.sel .nm { background: var(--orange); color: #111; }
.num { line-height: 18px; margin-top: 7px; }
.sfoot { height: 11px; margin-top: -2px; flex: none; }
.sel .sfoot { background: #323232; }
.insp .sec-first { height: 107px; }
.insp .sec-name { margin: 0; height: 128px; padding: 5px 6px 0; }
.insp .sfoot { height: 11px; }
.ios { height: 56px; display: flex; flex-direction: column; gap: 2px; margin-bottom: 10px; }
.io { height: 27px; background: #3f3f3f; border-radius: 3px; gap: 6px; padding: 0 6px; }
.io span { flex: 1; text-align: left; white-space: nowrap; }
.io b { width: 15px; height: 15px; background: #c3c3c3; color: #222; border-radius: 2px; font: 700 12px/15px Inter, sans-serif; }

/* desktop taskbar */
.taskbar { height: 61px; background: #dcdcdc; border-top: 1px solid #b5b5b5; color: #222; display: grid; grid-template-columns: 1fr auto 1fr; align-items: center; font: 15px/20px "Open Sans", "Noto Sans", sans-serif; }
.weather { justify-self: start; margin-left: 24px; gap: 8px; text-align: left; font-size: 14px; padding-bottom: 3px; }
.weather span { display: flex; flex-direction: column; }
.weather em { color: #555; }
.taskmid { display: flex; align-items: center; gap: 7px; padding-left: 3px; }
.taskmid > button { width: 48px; height: 48px; border-radius: 5px; position: relative; }
.search { width: 275px; height: 39px; border-radius: 20px; background: #f5f5f5; border: 1px solid #c4c4c4; display: flex; align-items: center; gap: 11px; padding: 0 13px; }
.search input { border: 0; background: none; outline: 0; font: 16px "Open Sans", sans-serif; width: 180px; }
.search input::placeholder { color: #555; }
.run::after { content: ""; position: absolute; bottom: 0; width: 8px; height: 4px; border-radius: 2px; background: #808080; }
.taskmid .cur { background: #eeeeee; }
.cur::after { width: 20px; background: #0078d4; }
.tray { justify-self: end; display: flex; align-items: center; gap: 19px; margin-right: 20px; font-size: 15px; padding-bottom: 3px; }
.lang, .clock { flex-direction: column; }
.clock { align-items: flex-end; }
.lang { margin: 0 1px 0 5px; font-size: 14px; }
.quick { gap: 16px; }
```
FILE: app.js
```js
const use = (id, cls = "s16") => `<svg class="${cls}"><use href="#${id}"/></svg>`;
const RED = "#c24a4a", ORA = "#d9752c", GRN = "#3f9457", BLU = "#4380bd";

// Collapsed control bar modules
document.getElementById("vmods").innerHTML = [
  ["Loop", "loop"], ["Perf", "perf"], ["Select", "selr"], ["Punch", "punch"], ["Screen", "screen"], ["ACT", "act"],
  ["Markers", "flag"], ["Events", "events"], ["Sync", "clock"], ["Custom", "list"], ["Mix Rcl", "cam"]
].map(([t, i]) => `<div class="mod"><i class="grip"></i><button>${use(i)}<span>${t}</span>${use("chev", "s14")}</button></div>`).join("");

// EQ thumbnail: each band is [colour, centre, gain, width]; cuts are the low and high roll-offs
function eq(e) {
  const W = 115, M = 32;
  const bump = (b, x) => b[2] / Math.pow(1 + ((x - b[1]) / b[3]) ** 2, 1.5);
  const lo = x => x < 24 ? e.lo * (1 - x / 24) ** 2 : 0;
  const hi = x => x > 91 ? e.hi * ((x - 91) / 24) ** 2 : 0;
  const line = f => { let d = ""; for (let x = 0; x <= W; x++) d += (x ? "L" : "M") + x + " " + f(x).toFixed(1); return d; };
  let s = `<svg class="eq" viewBox="0 0 115 64"><rect x=".5" y=".5" width="114" height="63" rx="3" fill="#1e1e1e" stroke="#484848"/>`;
  s += `<path d="M29.500 0v64M58.500 0v64M86.500 0v64M0 15.500h115M0 47.500h115" stroke="#4a4a4a"/>`;
  if (!e.bands) return s + `<path d="M0 32h115" stroke="#6a6a6a" stroke-width="1.500"/></svg>`;
  s += `<path d="${line(x => M + lo(x) + hi(x))}L115 32L0 32z" fill="#101010"/>`;
  e.bands.forEach(b => s += `<path d="${line(x => M - bump(b, x))}L115 32L0 32z" fill="${b[0]}" fill-opacity=".6" stroke="${b[0]}" stroke-width=".6"/>`);
  s += `<path d="M0 31.500h115" stroke="${e.c}" stroke-width="1.500"/>`;
  s += `<path d="${line(x => M - e.bands.reduce((a, b) => a + bump(b, x), 0) + lo(x) + hi(x))}" fill="none" stroke="#ddd"/></svg>`;
  return s;
}

function knob(pan, wave) {
  const a = pan * 1.45, r = a * Math.PI / 180;
  const X = 21 + 19 * Math.sin(r), Y = 22 - 19 * Math.cos(r);
  const arc = pan ? `M21 3A19 19 0 0 ${pan > 0 ? 1 : 0} ${X} ${Y}` : "M20 3h2";
  return `<div class="knob"><svg width="42" height="42" viewBox="0 0 42 42"><defs><linearGradient id="kg" x1="0" y1="0" x2="0" y2="1"><stop offset="0" stop-color="#6a6a6a"/><stop offset="1" stop-color="#3a3a3a"/></linearGradient></defs>
  <circle cx="21" cy="22" r="20" fill="#191919"/><circle cx="21" cy="22" r="15.500" fill="url(#kg)" stroke="#777" stroke-width=".8"/>
  <path d="${arc}" fill="none" stroke="#ea8738" stroke-width="2.500"/><path d="M21 9v8" stroke="#fff" stroke-width="2" transform="rotate(${a} 21 22)"/>${wave ? '<path d="M17 21q2-3 4-1t4-1" fill="none" stroke="#99a"/>' : ""}</svg>
  <input type="range" min="-100" max="100" value="${pan}" aria-label="Pan"></div>`;
}

const LEFT = [["6", 0], ["0", .203], ["6", .406], ["12", .583], ["18", .69], ["24", .757], ["36", .856], ["∞", 1]];
const at = f => `style="top:calc(24px + var(--len) * ${f.toFixed(3)})"`;

function fader(t, len) {
  // the infinity mark lies below the visible part of the console's longer scale
  const marks = len < 187 ? LEFT : LEFT.slice(0, 7);
  return `<div class="sec sec-fader"><i class="slot"></i>${marks.map(l => `<span class="lab" ${at(l[1])}>${l[0]}</span>`).join("")}
  ${[3, 9, 15, 21, 27, 33, 39].map((n, i) => `<span class="rlab" ${at(.095 + .138 * i)}>${n}</span>`).join("")}
  <svg class="spec"><use href="#spectrum"/></svg><i class="meter"></i>
  <input class="fader ${t.bus ? "blue" : ""}" type="range" min="0" max="${len}" value="${t.v}" style="--v:${t.v}" aria-label="${t.name} volume">
  ${t.val ? `<span class="val">${t.val}</span>` : ""}</div>`;
}

function buttons(t) {
  const bow = `<button aria-label="Interleave">${use("bow")}</button>`;
  if (t.bus) return `<div class="sec sec-btns"><button>M</button><button>S</button><button class="lit">R</button><button>W</button>${bow}</div>`;
  const echo = t.sel || t.insp ? `<button class="echo" aria-label="Input echo">${use("autoin", "s18")}</button>` : `<button aria-label="Input echo">${use("phones")}</button>`;
  return `<div class="sec sec-btns">${bow}<button aria-label="Phase">${use("phase")}</button><button class="lit">R</button><button>W</button><button>M</button><button>S</button><button aria-label="Record arm"><i class="rd"></i></button>${echo}</div>`;
}

const grip = `<div class="sgrip"></div>`;
const sends = t => `<div class="sec sec-sends"><div class="sendhead"><span>Sends</span><button aria-label="Add send">${use("plus", "s12")}</button></div><div class="sendbox"></div></div>`;
const pan = t => `<div class="sec sec-pan">${knob(t.pan, t.wave)}<span>Pan ${Math.abs(t.pan)}% ${t.pan > 0 ? "R" : t.pan < 0 ? "L" : "C"}</span></div>`;

function strip(t) {
  const fx = t.fx ? `<button class="${t.fxOn ? "on" : ""}">${t.fx}</button><i></i>` : "";
  return `<div class="strip ${t.sel ? "sel" : ""}">
  <div class="sec sec-eq"><div class="preset">${t.bus ? "<span>Untitled</span>" : ""}</div>
    <div class="prerow"><span>Pre</span>${use("prepost", "")}<button class="pw ${t.eq.bands ? "on" : ""}" aria-label="EQ power">${use("power", "s18")}</button></div>${eq(t.eq)}</div>
  ${grip}<div class="sec sec-fx"><div class="fxhead"><button class="fxpw" aria-label="FX power">${use("power", "s18")}</button><span>FX${t.n ? ` (${t.n})` : ""}</span><button aria-label="Add effect">${use("plus", "s12")}</button></div><div class="fxlist">${fx}</div></div>
  ${grip}${sends(t)}${buttons(t)}${pan(t)}${grip}${fader(t, 187)}
  <div class="sec sec-name"><button class="nm">${t.name}</button><div class="num">${t.num}</div></div><div class="sfoot"></div></div>`;
}

function inspStrip(t) {
  return `<div class="strip insp"><div class="sec sec-first"></div>${grip}${sends(t)}${buttons(t)}${pan(t)}${grip}${fader(t, 159)}
  <div class="sec sec-name"><div class="ios">${t.io.map(o => `<button class="io"><b>${o[0]}</b><span>${o[1]}</span>${use("chev", "s14")}</button>`).join("")}</div>
  <button class="nm">${t.name}</button><div class="num">${t.num}</div></div><div class="sfoot"></div></div>`;
}

const C = (c, bands, lo = 22, hi = 22) => ({ c, bands, lo, hi });
const OFF = {};
const tracks = [
  { name: "MSynth", pan: 23, v: 113, n: 2, fx: "Bitcrusher", fxOn: true, eq: C("#8a6a2c", [[RED, 21, -8, 12], [ORA, 44, 5, 7], [GRN, 69, 2, 7], [BLU, 92, 5, 8]]) },
  { name: "Airy keys", pan: -15, v: 105, n: 3, fx: "Sonitus Rever", eq: C("#3f9457", [[RED, 22, -25, 24], [ORA, 36, -4, 8], [GRN, 72, 6, 8], [BLU, 97, 11, 10]], 10, 18) },
  { name: "Flute", pan: 0, v: 117, eq: C("#4f8a66", [[RED, 16, -25, 5], [ORA, 36, -8, 7], [GRN, 69, 3, 7], [BLU, 94, 6, 7]], 16, 20) },
  { name: "SineViolinsLeg", pan: 51, v: 67, eq: C("#a5532c", [[RED, 22, 2, 6], [ORA, 43, 3, 7], [GRN, 69, 7, 6], [BLU, 92, -6, 10]]) },
  { name: "SineViolinsPic", pan: 25, v: 51, eq: C("#4a2a25", []) },
  { name: "SINEViola", pan: -16, v: 92, eq: C("#3c7f68", [[GRN, 75, 13, 9], [BLU, 93, 9, 7]]) },
  { name: "SINECello", pan: 15, v: 59, eq: C("#a5532c", [[RED, 17, 9, 7], [ORA, 48, 4, 6]]) },
  { name: "sforzando 1", pan: 0, v: 124, eq: C("#a5532c", [[RED, 17, 11, 8], [ORA, 52, 4, 6], [GRN, 77, 7, 6]], 16) },
  { name: "French horn", pan: -18, v: 139, eq: C("#a5532c", [[RED, 21, 9, 8], [ORA, 34, 7, 7], [GRN, 70, -5, 12], [BLU, 94, 20, 11]]) },
  { name: "Glockenspiel", pan: -21, v: 71, sel: true, eq: C("#34598a", [[GRN, 68, -3, 12], [BLU, 94, 9, 8]]) },
  { name: "Vital 1", pan: 0, v: 149, wave: true, n: 2, fx: "Tempo Delay", fxOn: true, eq: OFF }
].map((t, i) => ({ ...t, num: i + 1 }));
document.getElementById("tracks").innerHTML = tracks.map(strip).join("");
document.getElementById("buses").innerHTML = [
  { name: "Master", num: "A", bus: true, pan: 0, v: 139, eq: OFF },
  { name: "Metronome", num: "B", bus: true, pan: 0, v: 139, eq: OFF }
].map(strip).join("");
document.getElementById("ibody").innerHTML = [
  { name: "Glockenspiel", num: 10, insp: true, pan: -21, v: 60, val: "-14.0", io: [["I", "Virtual C"], ["O", "Master"]] },
  { name: "Master", num: "A", bus: true, pan: 0, v: 118, val: "-1.8", io: [["O", "Headpho"]] }
].map(inspStrip).join("");
```
